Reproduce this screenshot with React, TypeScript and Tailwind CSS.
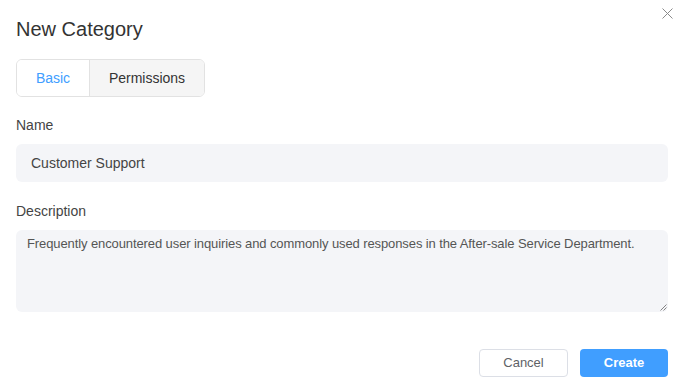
export default function App() {
    return (
        <div className="w-[681px] h-[390px] bg-white relative font-['Liberation_Sans',Arial,sans-serif] text-[#333]">
            <button className="absolute left-[662px] top-[8px]">
                <svg width="11" height="11" viewBox="0 0 11 11">
                    <path d="M0.5 0.5 L10.5 10.5 M10.5 0.5 L0.5 10.5" stroke="#8a8a8a" strokeWidth="1" />
                </svg>
            </button>

            <div className="pl-4 pr-[13px] pt-[15px]">
                <h1 className="text-[20px] leading-[28px] text-[#333]">New Category</h1>

                <div className="mt-4 flex w-[189px] h-[38px] border border-[#e2e2e2] rounded-[6px] overflow-hidden text-[14px]">
                    <div className="w-[73px] flex items-center justify-center bg-white text-[#409eff] border-r border-[#e2e2e2]">
                        Basic
                    </div>
                    <div className="flex-1 flex items-center justify-center bg-[#f5f5f5] text-[#333]">
                        Permissions
                    </div>
                </div>

                <div className="mt-[18px] text-[14px] leading-[20px] text-[#444]">Name</div>
                <div className="mt-[9px] h-[38px] rounded-[6px] bg-[#f4f5f8] flex items-center px-[15px] text-[14px] text-[#444]">
                    Customer Support
                </div>

                <div className="mt-[19px] text-[14px] leading-[20px] text-[#444]">Description</div>
                <div className="mt-[9px] h-[82px] rounded-[6px] bg-[#f4f5f8] relative px-[11px] py-[4px] text-[13px] leading-[20px] text-[#555] tracking-[-0.1px]">
                    Frequently encountered user inquiries and commonly used responses in the After-sale Service Department.
                    <svg className="absolute right-[1px] bottom-[1px]" width="7" height="7" viewBox="0 0 7 7">
                        <path d="M6.5 0.5 L0.5 6.5 M6.5 3.5 L3.5 6.5" stroke="#777" strokeWidth="0.9" />
                    </svg>
                </div>

                <div className="mt-[37px] flex justify-end gap-3 text-[13px]">
                    <button className="w-[89px] h-[28px] rounded-[4px] border border-[#dcdfe6] bg-white text-[#606266]">
                        Cancel
                    </button>
                    <button className="w-[88px] h-[28px] rounded-[4px] bg-[#409eff] text-white font-bold">
                        Create
                    </button>
                </div>
            </div>
        </div>
    )
}
